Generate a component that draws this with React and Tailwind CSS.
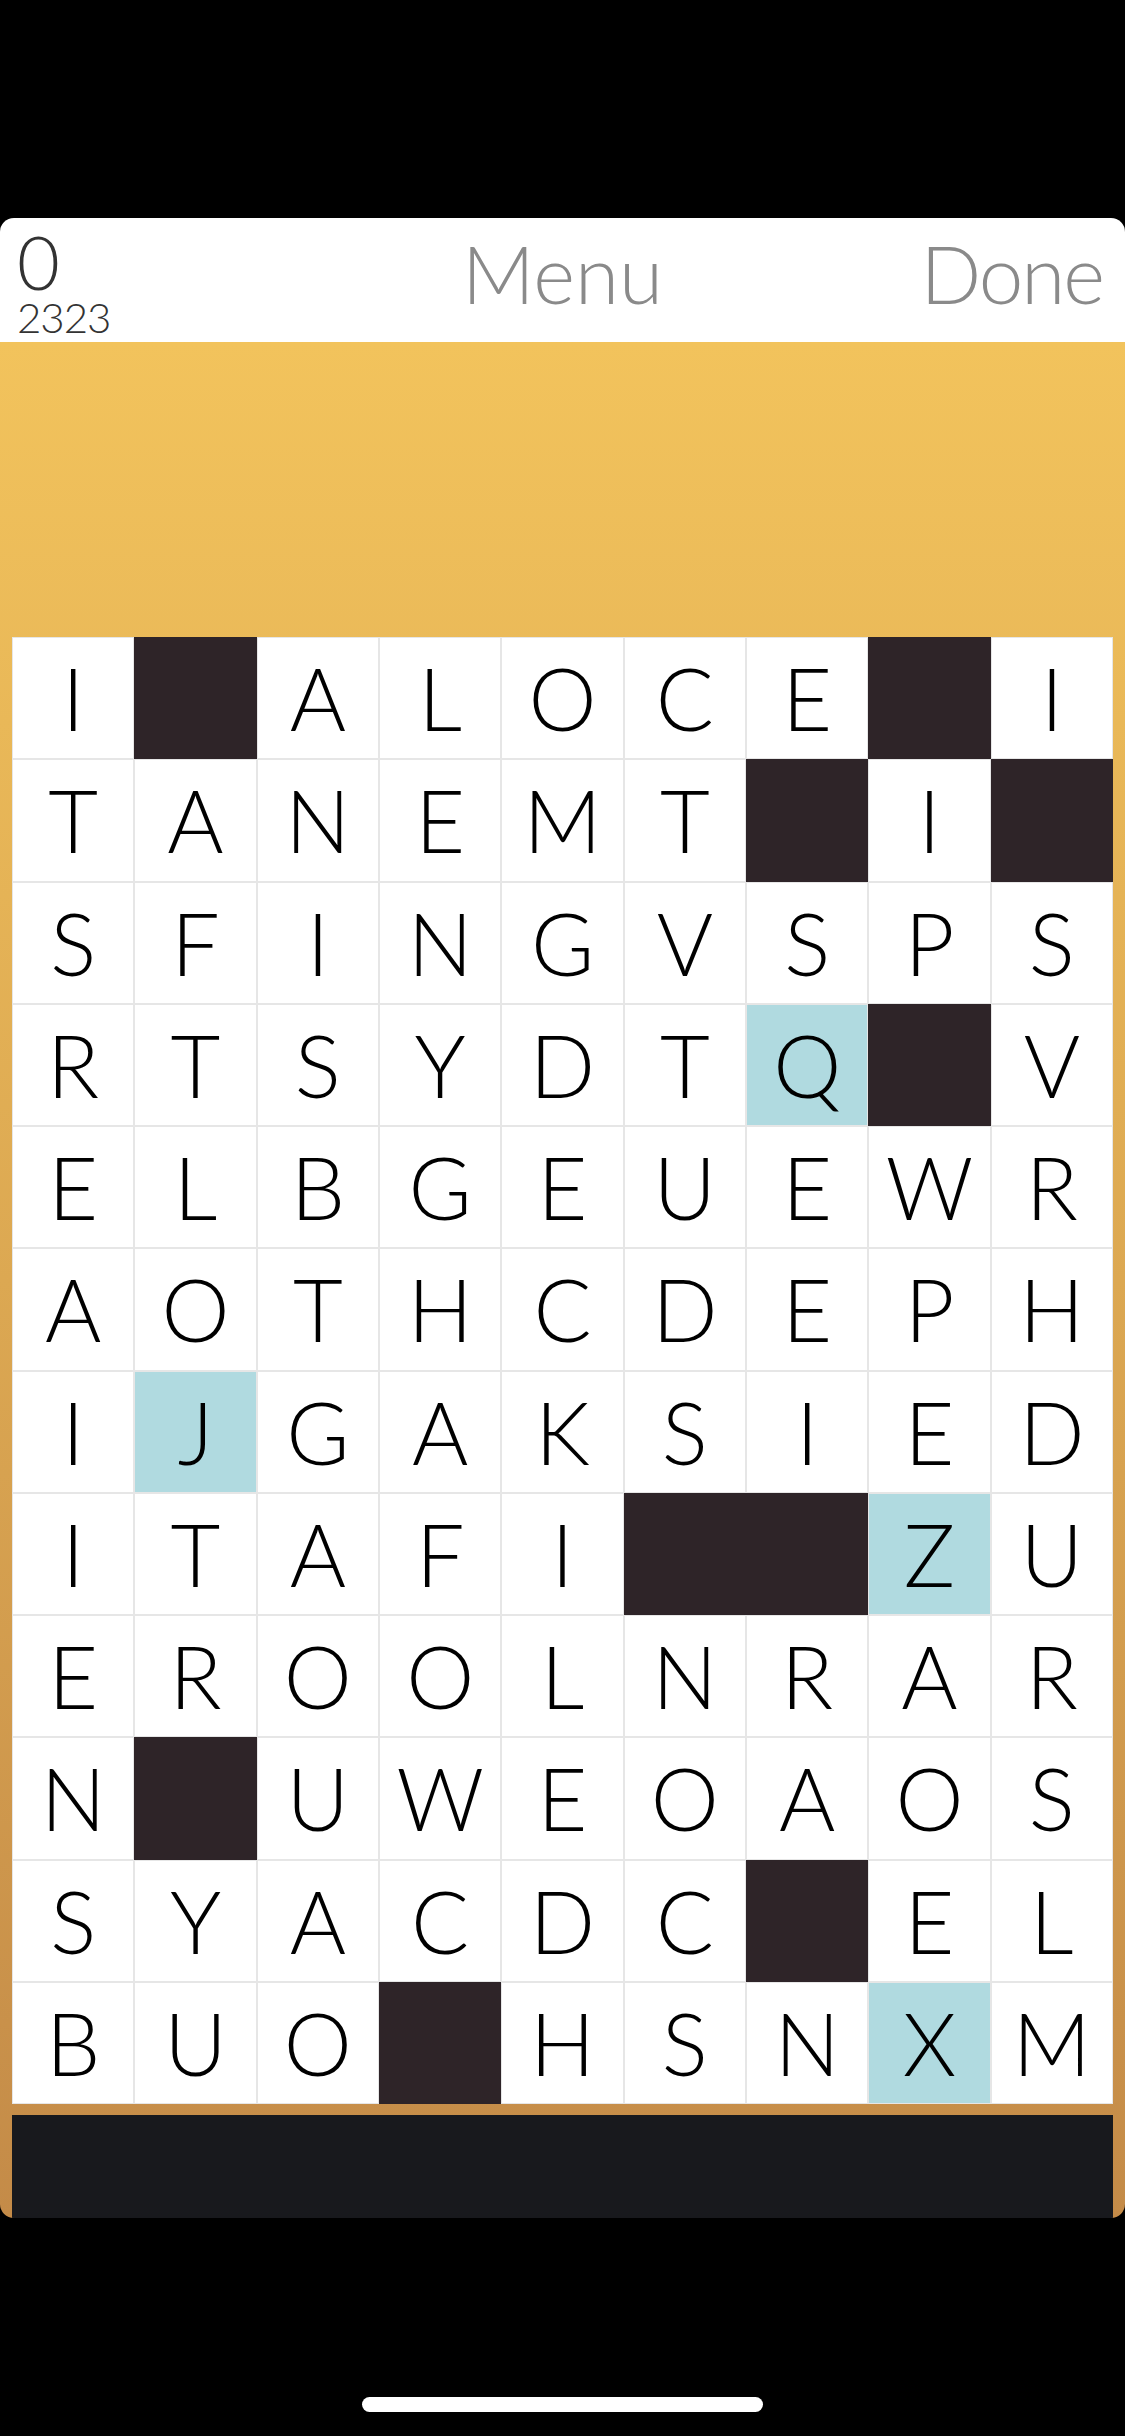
import React from 'react'

const rows = [
  'I#ALOCE#I',
  'TANEMT#I#',
  'SFINGVSPS',
  'RTSYDTQ#V',
  'ELBGEUEWR',
  'AOTHCDEPH',
  'IJGAKSIED',
  'ITAFI##ZU',
  'EROOLNRAR',
  'N#UWEOAOS',
  'SYACDC#EL',
  'BUO#HSNXM',
]

// highlighted cells: "row-col"
const marked = ['3-6', '6-1', '7-7', '11-7']

function Cell({ ch, hl }) {
  if (ch === '#') return <div className="bg-[#2e2428]" />
  return (
    <div
      className={`flex items-center justify-center border-[0.5px] border-[#e6e6e6] text-[86px] leading-none font-light text-black ${hl ? 'bg-[#b0dae0]' : 'bg-white'}`}
    >
      {ch}
    </div>
  )
}

export default function App() {
  return (
    <div className="w-[1125px] h-[2436px] bg-black flex flex-col" style={{ fontFamily: 'Lato, "Open Sans", sans-serif' }}>
      <div className="h-[218px] shrink-0" />

      <div className="rounded-[14px] overflow-hidden flex flex-col">
        {/* Header */}
        <div className="h-[124px] bg-white grid grid-cols-3 items-start">
          <div className="flex flex-col items-start pl-[17px] pt-[10px] text-[#333]">
            <span className="block text-[74px] leading-[68px] font-light">0</span>
            <span className="block text-[42px] leading-none font-light tracking-[-1px]">2323</span>
          </div>
          <div className="text-center text-[80px] leading-none pt-[15px] text-[#8a8a8a] font-light">Menu</div>
          <div className="text-right pr-[22px] text-[80px] leading-none pt-[15px] text-[#8a8a8a] font-light tracking-[-2px]">Done</div>
        </div>

        {/* Board */}
        <div className="bg-linear-to-b from-[#f2c35c] via-[#dca852] to-[#c48b48] flex flex-col">
          <div className="h-[295px]" />
          <div className="mx-[12px] h-[1467px] grid grid-cols-9 grid-rows-12 bg-white">
            {rows.map((r, i) =>
              r.split('').map((ch, j) => (
                <Cell key={`${i}-${j}`} ch={ch} hl={marked.includes(`${i}-${j}`)} />
              ))
            )}
          </div>
          <div className="h-[11px]" />
          <div className="mx-[12px] h-[103px] bg-[#18191d]" />
        </div>
      </div>

      <div className="flex-1 flex items-end justify-center pb-[24px]">
        <div className="w-[401px] h-[15px] rounded-full bg-white" />
      </div>
    </div>
  )
}
